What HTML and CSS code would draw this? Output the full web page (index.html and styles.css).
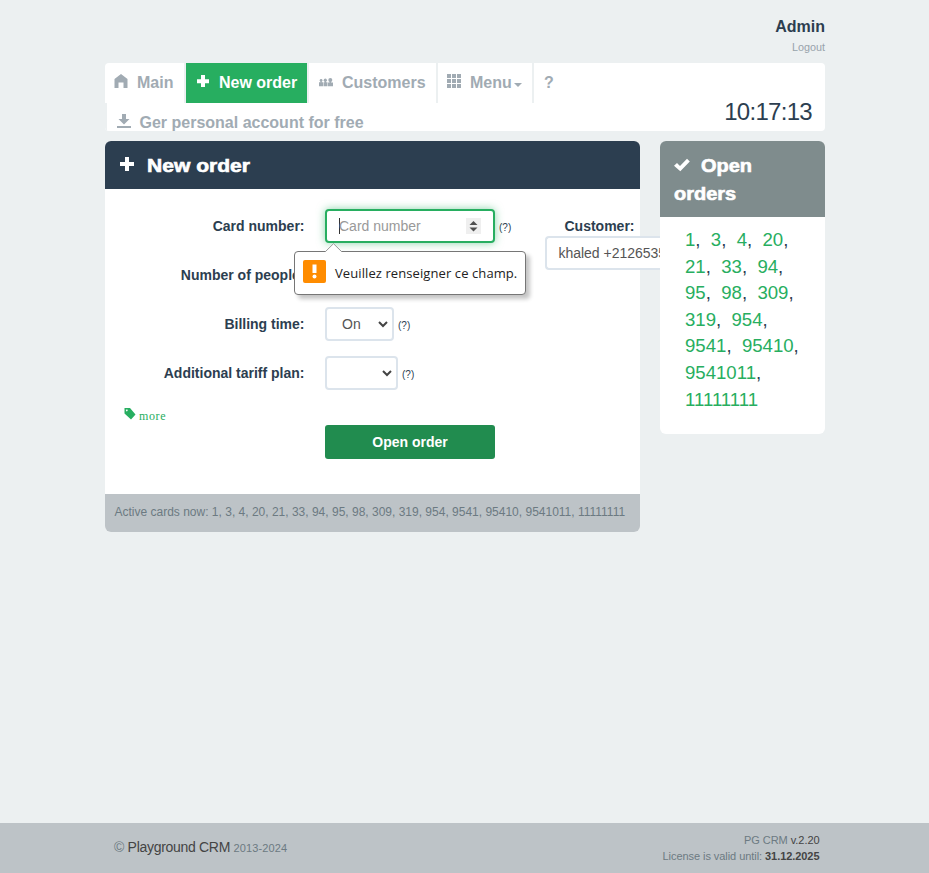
FILE: index.html
```html
<!DOCTYPE html>
<html lang="en">
<head>
<meta charset="utf-8">
<title>Playground CRM</title>
<link rel="stylesheet" href="styles.css">
</head>
<body>
<div class="container">
  <header class="user"><a class="user-name">Admin</a><a class="logout">Logout</a></header>
  <nav class="nav">
    <ul class="nav-list">
      <li class="nav-item main"><svg class="icon" viewBox="0 0 14 14"><path d="M0.500 5 7 0l6.500 5v9H9.500V8.500h-5V14h-4z"/></svg><span>Main</span></li>
      <li class="nav-item active"><svg class="icon" viewBox="0 0 14 14"><path d="M5 1h4v4.200h4v4H9V13H5V9.200H1v-4h4z"/></svg><span>New order</span></li>
      <li class="nav-item customers"><svg class="icon people" viewBox="0 0 14 9"><circle cx="2.100" cy="2.400" r="1.400"/><circle cx="6.300" cy="2.200" r="1.600"/><circle cx="11.300" cy="2" r="2"/><path d="M0 4.300h4v3.900H0zM4.500 4.300h4v3.900h-4zM9 4.400h5v3.800H9zM1.500 3h1.200v2H1.500zM5.700 3h1.300v2H5.700zM10.500 3h1.600v2h-1.600z"/></svg><span>Customers</span></li>
      <li class="nav-item menu"><svg class="icon" viewBox="0 0 14 14"><path d="M0 0h4v4H0zM5 0h4v4H5zM10 0h4v4h-4zM0 5h4v4H0zM5 5h4v4H5zM10 5h4v4h-4zM0 10h4v4H0zM5 10h4v4H5zM10 10h4v4h-4z"/></svg><span>Menu</span><i class="caret"></i></li>
      <li class="nav-item help"><span>?</span></li>
    </ul>
    <div class="nav-second">
      <a class="account"><svg class="icon" viewBox="0 0 14 14"><path d="M5 0h4v5h3.500L7 10.500 1.500 5H5zM0 12h14v2H0z"/></svg><span>Ger personal account for free</span></a>
      <time class="clock">10:17:13</time>
    </div>
  </nav>
  <div class="columns">
    <main class="panel">
      <h1 class="panel-title"><svg class="title-icon" viewBox="0 0 14 14"><path d="M5 0h4v5h5v4H9v5H5V9H0V5h5z"/></svg><span class="wide">New order</span></h1>
      <form class="form">
        <div class="fields">
          <div class="row"><label>Card number:</label>
            <div class="number-box"><i class="cursor"></i><span class="placeholder">Card number</span><span class="spin"><svg viewBox="0 0 15 16"><path d="M3.500 7 7.500 3l4 4zM3.500 9.500h8l-4 4z"/></svg></span>
              <div class="tooltip"><svg class="arrow" viewBox="0 0 18 9"><path d="M0 9 8.500.7 17 9" /></svg><span class="warn"><svg viewBox="0 0 23 23"><path d="M9.500 4.500h4v8.500h-4z"/><circle cx="11.500" cy="16.500" r="2"/></svg></span><span class="tip-text">Veuillez renseigner ce champ.</span></div>
            </div><span class="hint">(?)</span></div>
          <div class="row"><label>Number of people:</label><div class="box people-box"></div></div>
          <div class="row"><label>Billing time:</label><div class="box on"><span>On</span><svg class="chev" viewBox="0 0 10 7"><path d="m1 1 4 4 4-4"/></svg></div><span class="hint">(?)</span></div>
          <div class="row"><label>Additional tariff plan:</label><div class="box plan"><svg class="chev" viewBox="0 0 10 7"><path d="m1 1 4 4 4-4"/></svg></div><span class="hint">(?)</span></div>
          <a class="more"><svg viewBox="0 0 12 12"><path fill-rule="evenodd" d="M.5 0H6l5.500 6.500-4.500 5L.5 5.500zM2.800 1.400a.9.9 0 1 0 .01 0z"/></svg><span>more</span></a>
          <button class="submit" type="button">Open order</button>
        </div>
        <div class="customer"><label>Customer:</label><div class="customer-box">khaled +2126535</div></div>
      </form>
      <footer class="panel-foot">Active cards now: 1, 3, 4, 20, 21, 33, 94, 95, 98, 309, 319, 954, 9541, 95410, 9541011, 11111111</footer>
    </main>
    <aside class="orders">
      <h2 class="orders-title"><svg class="check" viewBox="0 0 16 14"><path d="M0 7.800 3 5l3 3L13 .8 15.800 3.500 6.300 13.200z"/></svg><span class="wide">Open</span><br><span class="wide">orders</span></h2>
      <div class="order-list">
        <p><a>1</a>,&nbsp; <a>3</a>,&nbsp; <a>4</a>,&nbsp; <a>20</a>,</p>
        <p><a>21</a>,&nbsp; <a>33</a>,&nbsp; <a>94</a>,</p>
        <p><a>95</a>,&nbsp; <a>98</a>,&nbsp; <a>309</a>,</p>
        <p><a>319</a>,&nbsp; <a>954</a>,</p>
        <p><a>9541</a>,&nbsp; <a>95410</a>,</p>
        <p><a>9541011</a>,</p>
        <p><a>11111111</a></p>
      </div>
    </aside>
  </div>
</div>
<footer class="site-foot"><div class="foot-inner">
  <div class="copy">© <b>Playground CRM</b> <small>2013-2024</small></div>
  <div class="license"><div>PG CRM <span>v.2.20</span></div><div>License is valid until: <strong>31.12.2025</strong></div></div>
</div></footer>
</body>
</html>
```
FILE: styles.css
```css
* { box-sizing: border-box; }
body { margin: 0; min-height: 873px; display: flex; flex-direction: column; background: #ecf0f1; color: #2c3e50; font: 14px/20px "Liberation Sans", Arial, sans-serif; }
ul, p, h1, h2 { margin: 0; padding: 0; }
.container { width: 720px; margin-left: 105px; flex: 1; }
.user { height: 63px; padding-top: 17px; display: flex; flex-direction: column; align-items: flex-end; }
.user-name { font-weight: bold; font-size: 16px; }
.logout { font-size: 10.8px; line-height: 21px; color: #98a3ab; }
.nav { height: 68px; background: #fff; border-radius: 4px; color: #a1abb3; font-size: 16px; font-weight: bold; overflow: hidden; }
.nav-list { list-style: none; display: flex; height: 40px; }
.nav-item { display: flex; align-items: center; padding-left: 10px; border-right: 2px solid #ecf0f1; }
.icon { width: 14px; height: 14px; fill: currentColor; flex: none; position: relative; top: -2px; }
.nav-item .icon { margin-right: 9px; }
.main { width: 81px; padding-left: 9px; }
.active { width: 123px; background: #27ae60; background-clip: padding-box; color: #fff; }
.customers { width: 129px; }
.nav-item .people { height: 9px; top: -1px; }
.menu { width: 96px; padding-left: 9px; }
.help { border: 0; }
.caret { border: 4px solid transparent; border-top-color: currentColor; border-bottom: 0; margin: 3px 0 0 2px; }
.nav-second { height: 28px; border-left: 2px solid #ecf0f1; display: flex; justify-content: space-between; }
.account { display: flex; align-items: center; height: 39px; padding-left: 9.500px; gap: 9px; }
.clock { font-size: 24px; font-weight: normal; color: #2c3e50; line-height: 18px; margin-right: 13px; letter-spacing: -.7px; }
.columns { display: flex; gap: 20px; align-items: flex-start; margin-top: 10px; }
.panel { width: 535px; height: 391px; background: #fff; border-radius: 6px; }
.panel-title, .orders-title { font-size: 18px; line-height: 28px; font-weight: 900; color: #fff; -webkit-text-stroke: .6px #fff; }
.panel-title { display: flex; align-items: center; height: 48px; padding: 2px 0 0 15px; gap: 12.500px; background: #2c3e50; border-radius: 6px 6px 0 0; }
.wide { display: inline-block; transform: scaleX(1.11); transform-origin: left; }
.panel-title .wide { transform: scaleX(1.17); }
.title-icon { width: 14px; height: 14px; fill: #fff; position: relative; top: -2px; }
.form { height: 305px; padding-top: 20px; display: flex; }
.fields { width: 440px; flex: none; }
.row { display: flex; align-items: center; height: 34px; margin-bottom: 15px; }
label { font-weight: bold; }
.row label { width: 199.500px; margin-right: 20.500px; text-align: right; flex: none; }
.box, .number-box, .customer-box { height: 34px; border: 2px solid #dce4ec; border-radius: 4px; background: #fff; color: #555; display: flex; align-items: center; }
.number-box { position: relative; width: 170px; border-color: #27ae60; padding: 0 12px; box-shadow: 0 0 8px rgba(39,174,96,.55); }
.cursor { width: 1px; height: 16px; background: #333; }
.placeholder { color: #999; margin-left: -1px; }
.spin { width: 15px; height: 16px; background: #efefef; margin-left: auto; }
.spin svg { display: block; fill: #505050; }
.hint { font-size: 10px; margin: 4px 0 0 4px; }
.people-box { width: 170px; }
.on { width: 69px; padding-left: 15px; justify-content: space-between; padding-right: 4px; }
.plan { width: 73px; justify-content: flex-end; padding-right: 4px; }
.chev { width: 10px; height: 7px; fill: none; stroke: #444; stroke-width: 2; }
.tooltip { position: absolute; z-index: 2; left: -33px; top: 40px; width: 232px; height: 44px; display: flex; align-items: center; background: #fff; border: 1px solid #767676; border-radius: 4px; box-shadow: 4px 4px 4px rgba(0,0,0,.23); padding-left: 8px; color: #222; }
.arrow { position: absolute; left: 30px; top: -9px; width: 18px; height: 9px; fill: #fff; stroke: #999; }
.warn { width: 23px; height: 23px; background: #ff8c00; border-radius: 2px; margin: -3px 9px 0 0; }
.warn svg { display: block; fill: #fff; }
.tip-text { font: 13px/20px "Open Sans", "Noto Sans", sans-serif; letter-spacing: .09px; white-space: nowrap; }
.more { display: flex; align-items: center; gap: 3px; height: 20px; margin: 1px 0 0 19px; color: #27ae60; font: 12px "Liberation Serif", "Times New Roman", serif; letter-spacing: .6px; }
.more svg { width: 12px; height: 12px; fill: currentColor; position: relative; top: -1px; }
.more span { padding-top: 3px; }
.submit { display: block; width: 170px; height: 34px; margin: 0 0 0 220px; padding: 0; border: 0; border-radius: 3px; background: #218c4f; color: #fff; font: bold 14px "Liberation Sans", Arial, sans-serif; }
.customer { width: 115px; padding-top: 7px; }
.customer label { display: block; margin-left: 19.500px; }
.customer-box { width: 115px; border-right: 0; border-radius: 4px 0 0 4px; padding-left: 11.500px; letter-spacing: -.02px; white-space: nowrap; }
.panel-foot { height: 38px; padding-left: 9.500px; background: #bdc3c7; border-radius: 0 0 6px 6px; font-size: 12px; line-height: 36px; color: #6c7a82; white-space: nowrap; }
.orders { position: relative; width: 165px; height: 293px; background: #fff; border-radius: 6px; }
.orders-title { height: 76px; padding: 11px 14px; border-radius: 6px 6px 0 0; background: #7f8c8d; }
.check { width: 16px; height: 14px; fill: #fff; margin-right: 11px; }
.order-list { padding: 10px 0 0 25px; font-size: 18.600px; line-height: 26.6px; white-space: nowrap; }
.order-list a { color: #27ae60; }
.site-foot { height: 50px; background: #bdc3c7; color: #6c7a82; }
.foot-inner { width: 720px; margin-left: 105px; padding: 9px 5.500px 0 9px; display: flex; justify-content: space-between; }
.copy { font-size: 14px; line-height: 30px; letter-spacing: -.3px; }
.copy b { font-weight: normal; color: #444; }
.copy small { font-size: 11px; letter-spacing: .12px; }
.license { font-size: 11px; line-height: 16px; text-align: right; letter-spacing: -.06px; }
.license span, .license strong { color: #444; }
```
